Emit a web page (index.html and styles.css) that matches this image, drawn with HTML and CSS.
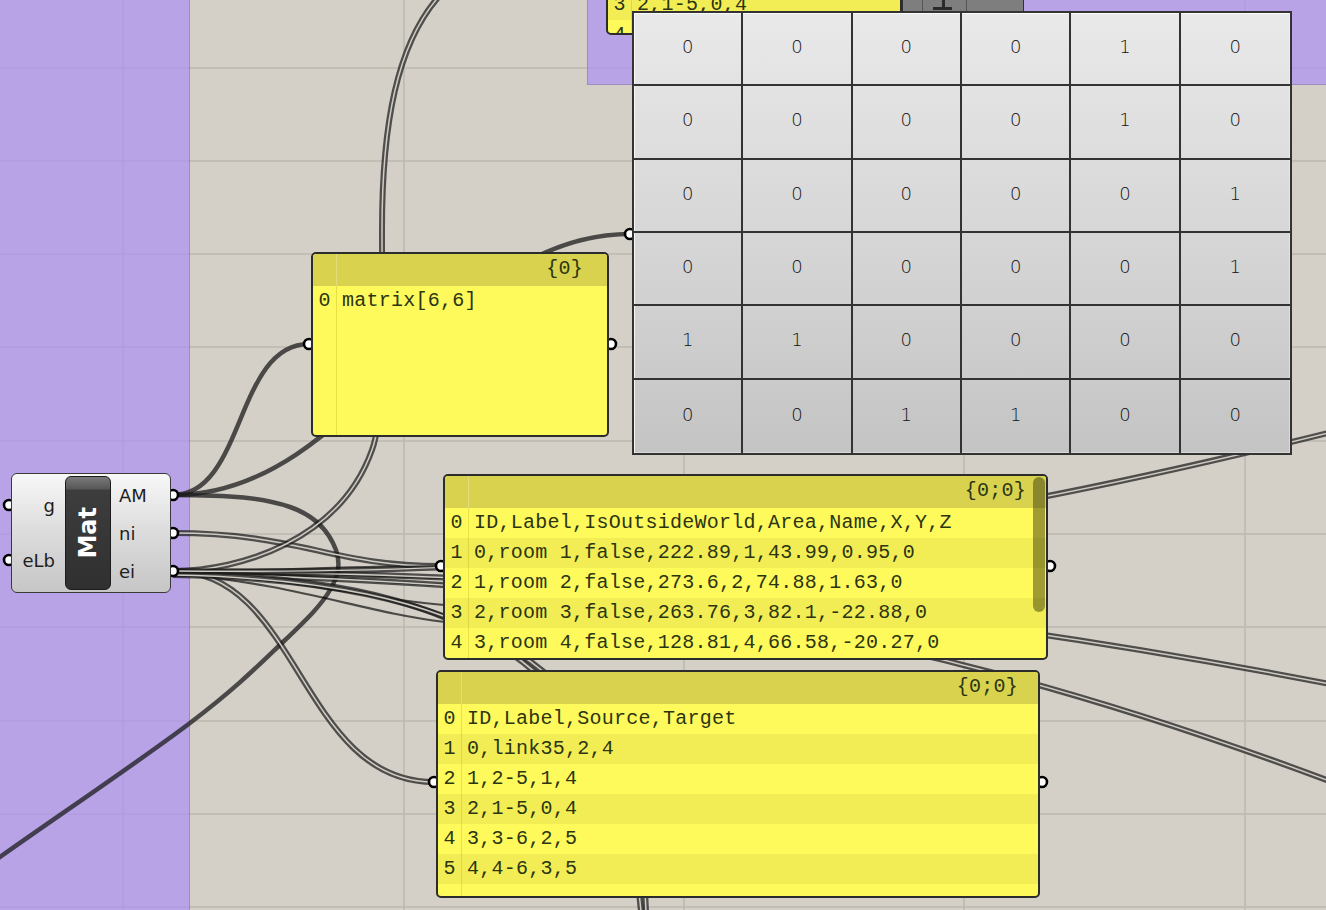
FILE: index.html
```html
<!DOCTYPE html>
<html>
<head>
<meta charset="utf-8">
<title>Grasshopper canvas</title>
<link rel="stylesheet" href="styles.css">
</head>
<body>
<div class="canvas">
  <svg class="wires" width="1326" height="910" viewBox="0 0 1326 910">
    <g class="grid">
      <line class="gridline" x1="123" y1="0" x2="123" y2="910"/>
      <line class="gridline" x1="404" y1="0" x2="404" y2="910"/>
      <line class="gridline" x1="684" y1="0" x2="684" y2="910"/>
      <line class="gridline" x1="964" y1="0" x2="964" y2="910"/>
      <line class="gridline" x1="1245" y1="0" x2="1245" y2="910"/>
      <line class="gridline" x1="0" y1="68" x2="1326" y2="68"/>
      <line class="gridline" x1="0" y1="161" x2="1326" y2="161"/>
      <line class="gridline" x1="0" y1="254" x2="1326" y2="254"/>
      <line class="gridline" x1="0" y1="347" x2="1326" y2="347"/>
      <line class="gridline" x1="0" y1="441" x2="1326" y2="441"/>
      <line class="gridline" x1="0" y1="534" x2="1326" y2="534"/>
      <line class="gridline" x1="0" y1="627" x2="1326" y2="627"/>
      <line class="gridline" x1="0" y1="721" x2="1326" y2="721"/>
      <line class="gridline" x1="0" y1="814" x2="1326" y2="814"/>
      <line class="gridline" x1="0" y1="907" x2="1326" y2="907"/>
    </g>
    <rect class="group" x="-2" y="-2" width="191.5" height="914"/>
    <rect class="group" x="587.5" y="-2" width="741" height="86.5"/>

    <!-- single wires from AM -->
    <path class="w1" d="M173,495 C245,495 235,344 309,344"/>
    <path class="w1" d="M173,495 C360,495 440,234 630,234"/>
    <path class="w1" d="M173,495 C232,495 262.8,497.8 290,507 C317.2,516.2 330,534 336,550 C341,565 338,576 330,590 C321.3,605.3 306.3,619.8 283,642 C259.7,664.2 237.2,687.2 190,723 C142.8,758.8 63.3,812.3 0,857 L-40,885"/>

    <!-- bundle from ei -->
    <path class="wb" d="M173,571 C300,571 330,566 441,566"/>
    <path class="wb" d="M173,572 C310,574 340,580 445,585"/>
    <path class="wb" d="M173,573 C300,578 360,598 445,605"/>
    <path class="wb" d="M173,574 C300,584 360,612 445,622"/>
    <path class="wb" d="M173,571 C290,572 340,575 445,578"/>

    <!-- list wires (double) -->
    <g class="dbl">
      <path class="w2" d="M173,533 C300,533 330,566 441,566"/>
      <path class="w2in" d="M173,533 C300,533 330,566 441,566"/>
      <path class="w2" d="M173,571 C240,571 340,540 372,450 C385,415 382,330 382,230 C382,130 395,40 445,-10"/>
      <path class="w2in" d="M173,571 C240,571 340,540 372,450 C385,415 382,330 382,230 C382,130 395,40 445,-10"/>
      <path class="w2" d="M173,571 C300,571 300,782 434,782"/>
      <path class="w2in" d="M173,571 C300,571 300,782 434,782"/>
      <path class="w2" d="M173,572 C550,572 900,600 1340,686"/>
      <path class="w2in" d="M173,572 C550,572 900,600 1340,686"/>
      <path class="w2" d="M173,573 C550,585 850,600 1340,785"/>
      <path class="w2in" d="M173,573 C550,585 850,600 1340,785"/>
      <path class="w2" d="M173,574 C440,576 620,650 641,912"/>
      <path class="w2in" d="M173,574 C440,576 620,650 641,912"/>
      <path class="w2" d="M173,575 C460,580 640,660 646,912"/>
      <path class="w2in" d="M173,575 C460,580 640,660 646,912"/>
      <path class="w2" d="M173,571 C600,575 900,540 1340,430"/>
      <path class="w2in" d="M173,571 C600,575 900,540 1340,430"/>
    </g>

    <!-- grips -->
    <circle class="grip" cx="9" cy="505" r="5"/>
    <circle class="grip" cx="9" cy="560" r="5"/>
    <circle class="grip" cx="173" cy="495" r="5"/>
    <circle class="grip" cx="173" cy="533" r="5"/>
    <circle class="grip" cx="173" cy="571" r="5"/>
    <circle class="grip" cx="309" cy="344" r="5"/>
    <circle class="grip" cx="611" cy="344" r="5"/>
    <circle class="grip" cx="441" cy="566" r="5"/>
    <circle class="grip" cx="1050" cy="566" r="5"/>
    <circle class="grip" cx="434" cy="782" r="5"/>
    <circle class="grip" cx="1042" cy="782" r="5"/>
    <circle class="grip" cx="630" cy="234" r="5"/>

    <!-- grey component partly hidden at the top -->
    <rect class="gbox" x="902.5" y="-30" width="121" height="60"/>
    <line class="gdiv" x1="922.5" y1="-30" x2="922.5" y2="30"/>
    <line class="gdiv" x1="966.5" y1="-30" x2="966.5" y2="30"/>
    <rect class="gglyph" x="942" y="0" width="3" height="8"/>
    <rect class="gglyph" x="933" y="7" width="19" height="3"/>
  </svg>

  <div class="panel ptop">
    <div class="row"><span class="idx">2</span><span class="txt">1,2-5,1,4</span></div>
    <div class="row alt"><span class="idx">3</span><span class="txt">2,1-5,0,4</span></div>
    <div class="row"><span class="idx">4</span><span class="txt">3,3-6,2,5</span></div>
  </div>

  <div class="matrix">
    <div class="cell">0</div><div class="cell">0</div><div class="cell">0</div><div class="cell">0</div><div class="cell">1</div><div class="cell">0</div>
    <div class="cell">0</div><div class="cell">0</div><div class="cell">0</div><div class="cell">0</div><div class="cell">1</div><div class="cell">0</div>
    <div class="cell">0</div><div class="cell">0</div><div class="cell">0</div><div class="cell">0</div><div class="cell">0</div><div class="cell">1</div>
    <div class="cell">0</div><div class="cell">0</div><div class="cell">0</div><div class="cell">0</div><div class="cell">0</div><div class="cell">1</div>
    <div class="cell">1</div><div class="cell">1</div><div class="cell">0</div><div class="cell">0</div><div class="cell">0</div><div class="cell">0</div>
    <div class="cell">0</div><div class="cell">0</div><div class="cell">1</div><div class="cell">1</div><div class="cell">0</div><div class="cell">0</div>
  </div>

  <div class="panel p1">
    <div class="phead"><span class="idx"></span><span class="tag">{0}</span></div>
    <div class="row"><span class="idx">0</span><span class="txt">matrix[6,6]</span></div>
    <div class="fill"><span class="idx"></span></div>
  </div>

  <div class="panel p2">
    <div class="phead"><span class="idx"></span><span class="tag">{0;0}</span></div>
    <div class="row"><span class="idx">0</span><span class="txt">ID,Label,IsOutsideWorld,Area,Name,X,Y,Z</span></div>
    <div class="row alt"><span class="idx">1</span><span class="txt">0,room 1,false,222.89,1,43.99,0.95,0</span></div>
    <div class="row"><span class="idx">2</span><span class="txt">1,room 2,false,273.6,2,74.88,1.63,0</span></div>
    <div class="row alt"><span class="idx">3</span><span class="txt">2,room 3,false,263.76,3,82.1,-22.88,0</span></div>
    <div class="row"><span class="idx">4</span><span class="txt">3,room 4,false,128.81,4,66.58,-20.27,0</span></div>
    <div class="thumb"></div>
  </div>

  <div class="panel p3">
    <div class="phead"><span class="idx"></span><span class="tag">{0;0}</span></div>
    <div class="row"><span class="idx">0</span><span class="txt">ID,Label,Source,Target</span></div>
    <div class="row alt"><span class="idx">1</span><span class="txt">0,link35,2,4</span></div>
    <div class="row"><span class="idx">2</span><span class="txt">1,2-5,1,4</span></div>
    <div class="row alt"><span class="idx">3</span><span class="txt">2,1-5,0,4</span></div>
    <div class="row"><span class="idx">4</span><span class="txt">3,3-6,2,5</span></div>
    <div class="row alt"><span class="idx">5</span><span class="txt">4,4-6,3,5</span></div>
    <div class="fill"><span class="idx"></span></div>
  </div>

  <div class="mat">
    <div class="ins"><span>g</span><span>eLb</span></div>
    <div class="pill"><span class="name">Mat</span></div>
    <div class="outs"><span>AM</span><span>ni</span><span>ei</span></div>
  </div>
</div>
</body>
</html>
```
FILE: styles.css
```css
html, body {
  margin: 0;
  padding: 0;
}
body {
  background: #d4d0c8;
  overflow: hidden;
}
.canvas {
  position: relative;
  width: 1326px;
  height: 910px;
  overflow: hidden;
  background: #d4d0c8;
  font-family: "DejaVu Sans", sans-serif;
}
.wires {
  position: absolute;
  left: 0;
  top: 0;
}
.gridline {
  stroke: #bdb9b1;
  stroke-width: 1.6;
}
.group {
  fill: rgb(172, 144, 243);
  fill-opacity: 0.7;
  stroke: rgba(80, 60, 150, 0.35);
  stroke-width: 1;
}
.w1 {
  fill: none;
  stroke: rgba(28, 28, 28, 0.75);
  stroke-width: 4.5;
}
.wb {
  fill: none;
  stroke: rgba(0, 0, 0, 0.65);
  stroke-width: 2.2;
}
.w2 {
  fill: none;
  stroke: rgba(28, 28, 28, 0.72);
  stroke-width: 6;
}
.w2in {
  fill: none;
  stroke: #cfcbc3;
  stroke-width: 1.5;
}
.grip {
  fill: #fff;
  stroke: #000;
  stroke-width: 2.6;
}
.gbox {
  fill: #7e7e7e;
  stroke: #333;
  stroke-width: 1;
}
.gdiv {
  stroke: #555;
  stroke-width: 1;
}
.gglyph {
  fill: #2a2a2a;
}

/* panels */
.panel {
  position: absolute;
  box-sizing: border-box;
  border: 2px solid #2c2c2c;
  border-radius: 5px;
  background: #fffa5c;
  overflow: hidden;
  display: flex;
  flex-direction: column;
  font-family: "Liberation Mono", monospace;
  font-size: 20px;
  line-height: 30px;
  letter-spacing: 0.25px;
  color: #2b3512;
}
.phead {
  height: 32px;
  flex: none;
  display: flex;
  background: #d8d24f;
  line-height: 30px;
}
.phead .idx {
  border-right-color: rgba(255, 255, 255, 0.25);
}
.tag {
  flex: 1;
  text-align: right;
  padding-right: 20px;
}
.row {
  height: 30px;
  flex: none;
  display: flex;
}
.row.alt {
  background: #f3ed55;
}
.idx {
  width: 23px;
  flex: none;
  text-align: center;
  border-right: 1px solid rgba(160, 150, 0, 0.25);
  letter-spacing: 0;
}
.txt {
  padding-left: 5px;
  white-space: pre;
}
.fill {
  flex: 1;
  display: flex;
}
.p1 {
  left: 311px;
  top: 252px;
  width: 298px;
  height: 185px;
}
.p1 .tag {
  padding-right: 24px;
}
.p2 {
  left: 443px;
  top: 474px;
  width: 605px;
  height: 186px;
}
.p3 {
  left: 436px;
  top: 670px;
  width: 604px;
  height: 228px;
}
.ptop {
  left: 606px;
  top: -42px;
  width: 296px;
  height: 77px;
}
.thumb {
  position: absolute;
  right: 1px;
  top: 1px;
  width: 12px;
  height: 135px;
  border-radius: 6px;
  background: rgba(45, 42, 0, 0.45);
}

/* matrix viewer */
.matrix {
  position: absolute;
  left: 632px;
  top: 11px;
  width: 660px;
  height: 444px;
  box-sizing: border-box;
  border: 2px solid #333;
  display: grid;
  grid-template-columns: repeat(6, 1fr);
  grid-template-rows: repeat(6, 1fr);
  background: linear-gradient(#e9e9e9, #c4c4c4);
  box-shadow: inset 1px 1px 0 rgba(255, 255, 255, 0.8), inset -1px -1px 0 rgba(255, 255, 255, 0.35);
}
.cell {
  display: flex;
  align-items: center;
  justify-content: center;
  padding-bottom: 4px;
  border-right: 2px solid #333;
  border-bottom: 2px solid #333;
  font-family: "DejaVu Sans", sans-serif;
  font-weight: 200;
  font-size: 18px;
  color: #111;
}
.cell:nth-child(6n) {
  border-right: none;
}
.cell:nth-last-child(-n+6) {
  border-bottom: none;
}

/* Mat component */
.mat {
  position: absolute;
  left: 11px;
  top: 473px;
  width: 160px;
  height: 120px;
  box-sizing: border-box;
  border: 1px solid #3a3a3a;
  border-radius: 6px;
  background: linear-gradient(#f8f8f8, #dedede 45%, #c6c6c6);
  display: flex;
  font-family: "DejaVu Sans", sans-serif;
  font-size: 18px;
  line-height: 21px;
  color: #1e1e1e;
}
.ins {
  width: 53px;
  box-sizing: border-box;
  padding-right: 10px;
  display: flex;
  flex-direction: column;
  justify-content: center;
  align-items: flex-end;
  gap: 34px;
}
.pill {
  width: 46px;
  box-sizing: border-box;
  margin: 2px 0;
  border: 1px solid #1c1c1c;
  border-radius: 6px;
  background: linear-gradient(#7a7a7a 0, #575757 12px, #3d3d3d 13px, #303030 100%);
  display: flex;
  align-items: center;
  justify-content: center;
}
.name {
  writing-mode: vertical-rl;
  transform: rotate(180deg);
  color: #fff;
  font-weight: bold;
  font-size: 24px;
  line-height: 24px;
}
.outs {
  flex: 1;
  padding-left: 8px;
  display: flex;
  flex-direction: column;
  justify-content: center;
  gap: 17px;
}
```
